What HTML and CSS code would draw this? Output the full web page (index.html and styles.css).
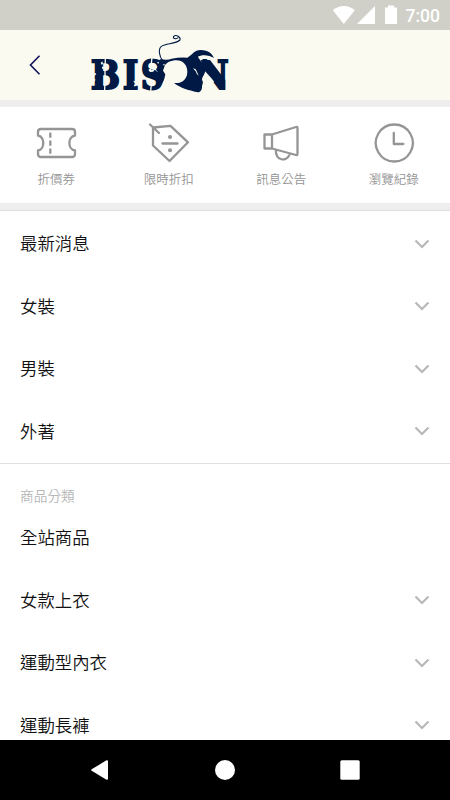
FILE: index.html
```
<!DOCTYPE html>
<html lang="zh-Hant">

<head>
    <meta charset="UTF-8">
    <meta name="viewport" content="width=device-width, initial-scale=1.0">
    <title>BISON</title>
    <link rel="stylesheet" href="styles.css">
</head>

<body>
    <div class="phone">
        <div class="status">
            <svg class="status-icons" width="66" height="20" viewBox="332 5 66 20">
                <path d="M332.8 10.2Q343.8 2 354.8 10.2L343.8 24z" />
                <path d="M375 6v18h-18z" />
                <path d="M385 7.5h3V5.5h6v2h3V24h-12z" />
            </svg>
            <span class="time">7:00</span>
        </div>
        <header class="header">
            <svg class="back" width="14" height="22" viewBox="28 54 14 22">
                <path d="M39.5 55.8L30.5 65l9 9.2" />
            </svg>
            <svg class="logo" width="142" height="62" viewBox="27 9 426 186">
                <g class="logo-text">
                    <text x="32" y="176" textLength="88" lengthAdjust="spacingAndGlyphs">B</text>
                    <text x="128" y="176" textLength="47" lengthAdjust="spacingAndGlyphs">I</text>
                    <text x="182" y="176" textLength="68" lengthAdjust="spacingAndGlyphs">S</text>
                    <text x="350" y="176" textLength="96" lengthAdjust="spacingAndGlyphs">N</text>
                </g>
                <!-- stencil cuts -->
                <path class="cut" d="M76 84l-2 98M216 82l-3 26M215 150l-3 34" />
                <path class="chip" d="M37 132l9-3 3 4-7 5zM62 99l5-5 2 8-4 2zM66 110h6v6h-6zM40 146l7 3-5 6zM160 152l6 2-2 6zM162 164h5v5h-5zM205 120l7-6 3 6 9-3-4 8-10 1zM232 117l10 3-4 7-8-2z" />
                <!-- bull -->
                <path class="chip" d="M340 84L366 84L378 118L402 154L390 186L340 186z" />
                <path d="M362 90L390 90L436 150V180H426L374 122z" />
                <path d="M241 87Q262 92 275 86Q300 81 322 83C340 72 342 60 362 60C385 60 398 72 402 85C388 75 368 72 356 80C354 88 374 102 377 116C377 130 366 140 366 150C372 158 366 162 366 172C366 180 360 188 354 187C330 182 300 174 282 159C308 162 322 145 322 125C322 105 308 91 290 91C272 91 258 98 254 108L249 122L256 133C252 158 242 174 222 178C238 162 242 150 239 136L228 118L238 104z" />
                <path class="chip" d="M339 115q9 1 11 8l6 14q-6-2-8-12zM248 104l6-3-1 6zM231 97l6-2-2 7z" />
                <path class="horn" d="M355 82Q378 76 401 86" />
                <path class="tail" d="M247 90C238 80 234 57 244 49C259 39 286 43 300 30C303 20 288 13 281 19C277 25 288 29 295 23" />
            </svg>
        </header>
        <nav class="quick">
            <div class="quick-item">
                <svg class="quick-icon" width="44" height="44" viewBox="34 121 44 44">
                    <path d="M41 129H72q3 0 3 3v3.500c-7.500 1-7.500 14 0 15V154q0 3-3 3H41q-3 0-3-3v-3.500c7-1 7-14 0-15V132q0-3 3-3z" />
                    <path class="flat" d="M50.300 132.500v5.200M50.300 140.500v5.200M50.300 148.500v5.200" />
                </svg>
                <span>折價券</span>
            </div>
            <div class="quick-item">
                <svg class="quick-icon" width="44" height="44" viewBox="147 121 44 44">
                    <path d="M153 127.500L170.500 125.800L188 142.300L169.500 161L153 145.500zM150 124.500l9 8.500M162.500 143.500h15" />
                    <circle cx="170" cy="137" r="2" />
                    <circle cx="170" cy="150.200" r="2" />
                </svg>
                <span>限時折扣</span>
            </div>
            <div class="quick-item">
                <svg class="quick-icon" width="44" height="44" viewBox="259 121 44 44">
                    <path d="M264.500 134.500h7.500v14h-7.500zM272 134.500L296 127q1.500-.5 1.500 1V153.500q0 2-1.500 1.500L272 148.500M275.800 150c0 11 10.500 12 13.500 5" />
                </svg>
                <span>訊息公告</span>
            </div>
            <div class="quick-item">
                <svg class="quick-icon" width="44" height="44" viewBox="372 121 44 44">
                    <path d="M393.800 133v11h9.500" />
                    <path d="M394.300 124.500a18.500 18.500 0 1 0 .01 0z" />
                </svg>
                <span>瀏覽紀錄</span>
            </div>
        </nav>
        <main class="menu">
            <div class="group">
                <div class="row"><span>最新消息</span><svg class="arrow" viewBox="0 0 16 10"><path d="M1.500 1.500L8 8l6.500-6.500" /></svg></div>
                <div class="row"><span>女裝</span><svg class="arrow" viewBox="0 0 16 10"><path d="M1.500 1.500L8 8l6.500-6.500" /></svg></div>
                <div class="row"><span>男裝</span><svg class="arrow" viewBox="0 0 16 10"><path d="M1.500 1.500L8 8l6.500-6.500" /></svg></div>
                <div class="row"><span>外著</span><svg class="arrow" viewBox="0 0 16 10"><path d="M1.500 1.500L8 8l6.500-6.500" /></svg></div>
            </div>
            <div class="group">
                <div class="title">商品分類</div>
                <div class="row"><span>全站商品</span></div>
                <div class="row"><span>女款上衣</span><svg class="arrow" viewBox="0 0 16 10"><path d="M1.500 1.500L8 8l6.500-6.500" /></svg></div>
                <div class="row"><span>運動型內衣</span><svg class="arrow" viewBox="0 0 16 10"><path d="M1.500 1.500L8 8l6.500-6.500" /></svg></div>
                <div class="row"><span>運動長褲</span><svg class="arrow" viewBox="0 0 16 10"><path d="M1.500 1.500L8 8l6.500-6.500" /></svg></div>
            </div>
        </main>
        <footer class="navbar">
            <svg width="20" height="22" viewBox="0 0 20 22"><path class="nav-back" d="M2.200 11L17 2.200v17.600z" /></svg>
            <svg width="20" height="20" viewBox="0 0 20 20"><circle cx="10" cy="10" r="10" /></svg>
            <svg width="20" height="20" viewBox="0 0 20 20"><rect x=".3" y=".3" width="19.400" height="19.400" rx="1.500" /></svg>
        </footer>
    </div>
</body>

</html>
```
FILE: styles.css
```
body {
    margin: 0;
    font-family: "Noto Sans CJK TC", sans-serif;
    font-weight: 350;
}

svg {
    display: block;
    flex-shrink: 0;
}

.phone {
    display: flex;
    flex-direction: column;
    height: 800px;
    overflow: hidden;
    background: #fff;
}

.status {
    box-sizing: border-box;
    height: 30px;
    flex-shrink: 0;
    padding-right: 10px;
    display: flex;
    align-items: center;
    justify-content: flex-end;
    gap: 8px;
    background: #d0d0c8;
    color: #fff;
}

.status-icons {
    fill: #fff;
}

.time {
    font: 500 17.5px/30px Roboto, sans-serif;
    padding-top: 2px;
}

.header {
    height: 70px;
    flex-shrink: 0;
    display: flex;
    align-items: center;
    gap: 47px;
    padding-left: 28px;
    background: #fbfaf0;
}

.back {
    fill: none;
    stroke: #11115c;
    stroke-width: 1.6;
}

.logo {
    margin-top: -2px;
    overflow: visible;
    fill: #001a45;
}

.logo-text {
    font: bold 119px "DejaVu Serif", serif;
    stroke: #001a45;
    stroke-width: 6;
}

.cut {
    fill: none;
    stroke: #fbfaf0;
    stroke-width: 4;
}

.chip {
    fill: #fbfaf0;
}

.horn {
    fill: none;
    stroke: #fbfaf0;
    stroke-width: 5;
}

.tail {
    fill: none;
    stroke: #001a45;
    stroke-width: 3.2;
}

.quick {
    height: 96px;
    flex-shrink: 0;
    display: grid;
    grid-template-columns: repeat(4, 1fr);
    border-top: 7px solid #eee;
    border-bottom: 7px solid #eee;
}

.quick-item {
    display: flex;
    flex-direction: column;
    align-items: center;
    padding-top: 14px;
    font-size: 12.5px;
    line-height: 18px;
    gap: 5px;
    color: #959595;
}

.quick-icon {
    fill: none;
    stroke: #959595;
    stroke-width: 2.3;
    stroke-linecap: round;
    stroke-linejoin: round;
}

.quick-icon circle {
    fill: #959595;
    stroke: none;
}

.flat {
    stroke-linecap: butt;
}

.menu {
    flex: 1;
    min-height: 0;
    overflow: hidden;
    border-top: 1px solid #ddd;
}

.group {
    padding-top: 1.5px;
}

.group + .group {
    border-top: 1px solid #e0e0e0;
    padding-top: 0;
}

.row {
    height: 62.5px;
    display: flex;
    align-items: center;
    justify-content: space-between;
    padding: 0 20px;
    font-size: 17.4px;
    color: #111;
}

.row span {
    padding-bottom: 2px;
}

.arrow {
    width: 16px;
    height: 10px;
    fill: none;
    stroke: #b8b8b8;
    stroke-width: 2.2;
}

.title {
    height: 43px;
    padding: 20px 20px 0;
    box-sizing: border-box;
    font-size: 13.7px;
    line-height: 22px;
    color: #b5b5b5;
}

.navbar {
    height: 60px;
    flex-shrink: 0;
    display: flex;
    align-items: center;
    justify-content: center;
    gap: 105px;
    background: #000;
    fill: #fff;
}

.nav-back {
    stroke: #fff;
    stroke-width: 2;
    stroke-linejoin: round;
}
```
